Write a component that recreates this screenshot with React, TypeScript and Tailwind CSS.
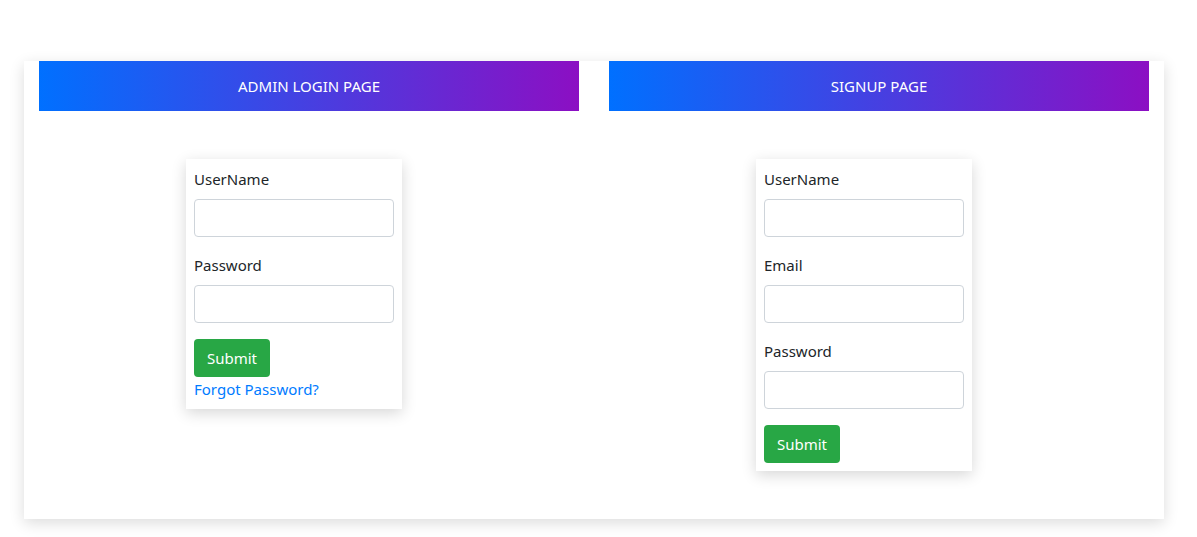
import React from "react";

function Field({ label }: { label: string }) {
  return (
    <div className="mb-4">
      <label className="block mb-2 text-[15px] leading-6 text-[#212529]">{label}</label>
      <input
        type="text"
        className="block w-full h-[38px] rounded-[4px] border border-[#ced4da] bg-white px-3 outline-none"
      />
    </div>
  );
}

function Panel({ title, fields, forgot }: { title: string; fields: string[]; forgot?: boolean }) {
  return (
    <div className="w-[540px]">
      <div className="h-[50px] flex items-center justify-center bg-[linear-gradient(to_right,#0070ff,#8c0fc3)] text-white text-[15px]">
        {title}
      </div>
      <div className="pl-[147px] mt-12">
        <div className="w-[216px] bg-white p-2 shadow-[0_4px_14px_rgba(0,0,0,0.16)]">
          {fields.map((f) => (
            <Field key={f} label={f} />
          ))}
          <button className="h-[38px] w-[76px] rounded-[4px] bg-[#28a745] text-white text-[15px] leading-6">
            Submit
          </button>
          {forgot && (
            <div>
              <a href="#" className="text-[#007bff] text-[15px] leading-6">
                Forgot Password?
              </a>
            </div>
          )}
        </div>
      </div>
    </div>
  );
}

export default function App() {
  return (
    <div
      className="min-h-[537px] bg-white pt-[61px]"
      style={{ fontFamily: '"Noto Sans", "Open Sans", "Liberation Sans", sans-serif' }}
    >
      <div className="ml-[24px] w-[1140px] bg-white px-[15px] pb-12 shadow-[0_4px_14px_rgba(0,0,0,0.14)]">
        <div className="flex gap-[30px] items-start">
          <Panel title="ADMIN LOGIN PAGE" fields={["UserName", "Password"]} forgot />
          <Panel title="SIGNUP PAGE" fields={["UserName", "Email", "Password"]} />
        </div>
      </div>
    </div>
  );
}
